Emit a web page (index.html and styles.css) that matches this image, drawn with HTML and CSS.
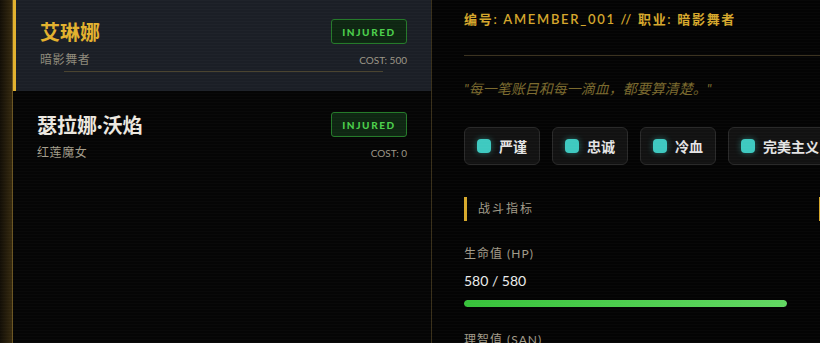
FILE: index.html
```html
<!DOCTYPE html>
<html lang="zh-CN">
<head>
  <meta charset="UTF-8"/>
  <meta name="viewport" content="width=device-width, initial-scale=1.0"/>
  <title>成员档案</title>
  <link rel="stylesheet" href="styles.css">
</head>
<body>
  <div class="edge"></div>

  <!-- roster list -->
  <aside class="roster">
    <div class="card active">
      <div class="card-row">
        <span class="card-name">艾琳娜</span>
        <span class="badge">INJURED</span>
      </div>
      <div class="card-row sub-row">
        <span class="card-sub">暗影舞者</span>
        <span class="card-cost">COST: 500</span>
      </div>
    </div>
    <div class="card">
      <div class="card-row">
        <span class="card-name">瑟拉娜·沃焰</span>
        <span class="badge">INJURED</span>
      </div>
      <div class="card-row sub-row">
        <span class="card-sub">红莲魔女</span>
        <span class="card-cost">COST: 0</span>
      </div>
    </div>
  </aside>

  <!-- detail panel -->
  <main class="detail">
    <div class="detail-head">编号: AMEMBER_001 // 职业: 暗影舞者</div>
    <p class="quote">"每一笔账目和每一滴血，都要算清楚。"</p>

    <div class="tags">
      <span class="tag"><i class="tag-dot"></i>严谨</span>
      <span class="tag"><i class="tag-dot"></i>忠诚</span>
      <span class="tag"><i class="tag-dot"></i>冷血</span>
      <span class="tag"><i class="tag-dot"></i>完美主义</span>
    </div>

    <div class="stats">
      <section class="stat-col">
        <h3 class="section-title">战斗指标</h3>
        <div class="stat">
          <div class="stat-label">生命值 (HP)</div>
          <div class="stat-value">580 / 580</div>
          <div class="bar"><div class="bar-fill" style="width: 100%"></div></div>
        </div>
        <div class="stat">
          <div class="stat-label">理智值 (SAN)</div>
        </div>
      </section>
      <section class="stat-col">
        <h3 class="section-title"></h3>
      </section>
    </div>
  </main>
</body>
</html>
```

FILE: styles.css
```css
:root {
  --gold: #e3b22e;
  --muted: #a29c8a;
  --bg: #040404;
  --font: Lato, "Noto Sans CJK SC", sans-serif;
}
*, *::before, *::after { box-sizing: border-box; }
body {
  margin: 0;
  height: 343px;
  overflow: hidden;
  display: flex;
  background: var(--bg);
  font-family: var(--font);
  color: #e6e6e6;
}
/* faint scanlines over everything */
body::after {
  content: "";
  position: fixed; inset: 0;
  pointer-events: none;
  background: repeating-linear-gradient(to bottom, rgba(255,255,255,0.018) 0 1px, transparent 1px 3px);
}
.edge {
  flex: none; width: 12px;
  background: linear-gradient(to right, #120e06, #35290f);
}
.roster {
  flex: none; width: 420px;
  border-left: 1px solid #6b5522;
  border-right: 1px solid #3a301a;
  background: #050505;
}
.card {
  position: relative;
  height: 91px;
  padding: 21px 24px 0 24px;
}
.card.active {
  padding-top: 19px;
  background: #1b1f26;
  border-left: 3px solid var(--gold);
}
.card.active::after {
  content: "";
  position: absolute; left: 48px; right: 48px; bottom: 19px;
  height: 1px; background: #4a4430;
}
.card-row {
  display: flex; justify-content: space-between; align-items: center;
  height: 25px;
}
.sub-row {
  margin-top: 8px; height: 18px;
  align-items: baseline;
}
.card-name {
  font-size: 20px; font-weight: 700;
  color: #ece8e0;
}
.active .card-name { color: var(--gold); }
.badge {
  width: 76px; height: 25px;
  display: inline-flex; align-items: center; justify-content: center;
  border: 1px solid #257a2a; border-radius: 3px;
  background: #0e2612;
  color: #4ccf4c;
  font-size: 10px; font-weight: 900; letter-spacing: 1.6px;
}
.card-sub {
  font-size: 12px; line-height: 16px; letter-spacing: 0.6px;
  color: #8f8a7c;
}
.card:not(.active) .card-sub { color: #a49e8c; }
.card-cost {
  font-size: 10px; color: #9c9686;
}
.detail {
  flex: none; width: 800px;
  padding: 10px 0 0 32px;
}
.detail-head {
  font-size: 13px; font-weight: 600; letter-spacing: 1.7px;
  line-height: 18px;
  color: #d5a72c;
  padding-bottom: 27px;
  border-bottom: 1px solid #3c3320;
}
.quote {
  margin: 24px 0 0;
  font-size: 14px; line-height: 18px;
  font-style: italic;
  color: #7b6a2e;
}
.tags {
  display: flex; gap: 12px;
  margin-top: 29px;
}
.tag {
  flex: none;
  display: inline-flex; align-items: center; gap: 8px;
  height: 38px; padding: 0 12px;
  background: #121212;
  border: 1px solid #2a2a2a; border-radius: 6px;
  font-size: 14px; font-weight: 600; color: #e4e4e4;
}
.tag-dot {
  width: 14px; height: 14px; border-radius: 4px;
  background: #3ec9c0;
  box-shadow: 0 0 6px rgba(62,201,192,0.45);
}
.stats {
  display: grid;
  grid-template-columns: 323px 323px;
  gap: 32px;
  margin-top: 32px;
}
.section-title {
  margin: 0;
  height: 24px; line-height: 24px;
  padding-left: 11px;
  border-left: 3px solid #d7a92c;
  font-size: 12px; font-weight: 400; letter-spacing: 2px;
  color: var(--muted);
}
.stat { margin-top: 24px; }
.stat-label {
  font-size: 12px; line-height: 17px; letter-spacing: 1px;
  color: var(--muted);
}
.stat-value {
  margin-top: 9px;
  font-size: 14px; line-height: 20px;
  color: #ececec;
}
.bar {
  margin-top: 9px;
  height: 7px; border-radius: 4px;
  background: #1a1a1a;
  overflow: hidden;
}
.bar-fill {
  height: 100%; border-radius: 4px;
  background: linear-gradient(to right, #37c23a, #62d862);
}
```
